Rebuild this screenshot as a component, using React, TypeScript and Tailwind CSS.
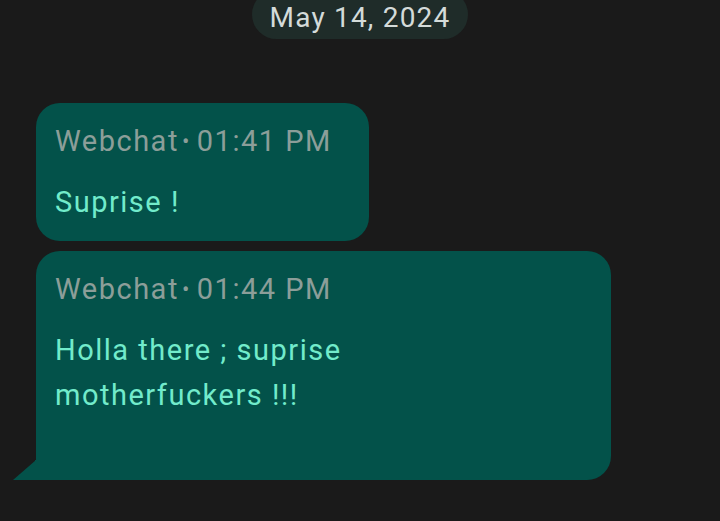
import React from 'react'

const Bubble = ({ time, lines, tail, className }: { time: string; lines: string[]; tail?: boolean; className: string }) => {
    return (
        <div className={`relative bg-[#03524a] rounded-[24px] pl-[19px] pt-[20px] ${tail ? 'rounded-bl-none' : ''} ${className}`}>
            <div className="text-[29px] leading-[36px] tracking-[1.5px] text-[#8c9e99] whitespace-nowrap">
                Webchat<span className="ml-[3px] mr-[6px] text-[22px] align-[2px]">•</span>{time}
            </div>
            <div className="mt-[20px] text-[29px] leading-[45px] tracking-[1.5px] text-[#72ebcb]">
                {lines.map((l) => (
                    <div key={l}>{l}</div>
                ))}
            </div>
            {tail && (
                <svg className="absolute left-[-23px] bottom-0" width="24" height="20" viewBox="0 0 24 20">
                    <path d="M23 0 L23 20 L0 20 Z" fill="#03524a" />
                    <rect x="22" y="0" width="2" height="20" fill="#03524a" />
                </svg>
            )}
        </div>
    )
}

const App = () => {
    return (
        <div className="h-[521px] w-[720px] overflow-hidden bg-[#1a1a1a] font-['Roboto',sans-serif]">
            <div className="flex justify-center">
                <div className="mt-[-10px] pt-[6px] h-[49px] w-[216px] rounded-full bg-[#1f2c29] flex items-center justify-center text-[28px] text-[#d4dbd9] tracking-[1.2px]">
                    May 14, 2024
                </div>
            </div>
            <div className="pl-[36px] mt-[64px] flex flex-col items-start">
                <Bubble time="01:41 PM" lines={['Suprise !']} className="w-[333px] h-[138px]" />
                <Bubble time="01:44 PM" lines={['Holla there ; suprise', 'motherfuckers !!!']} tail className="mt-[10px] w-[575px] h-[229px]" />
            </div>
        </div>
    )
}

export default App
